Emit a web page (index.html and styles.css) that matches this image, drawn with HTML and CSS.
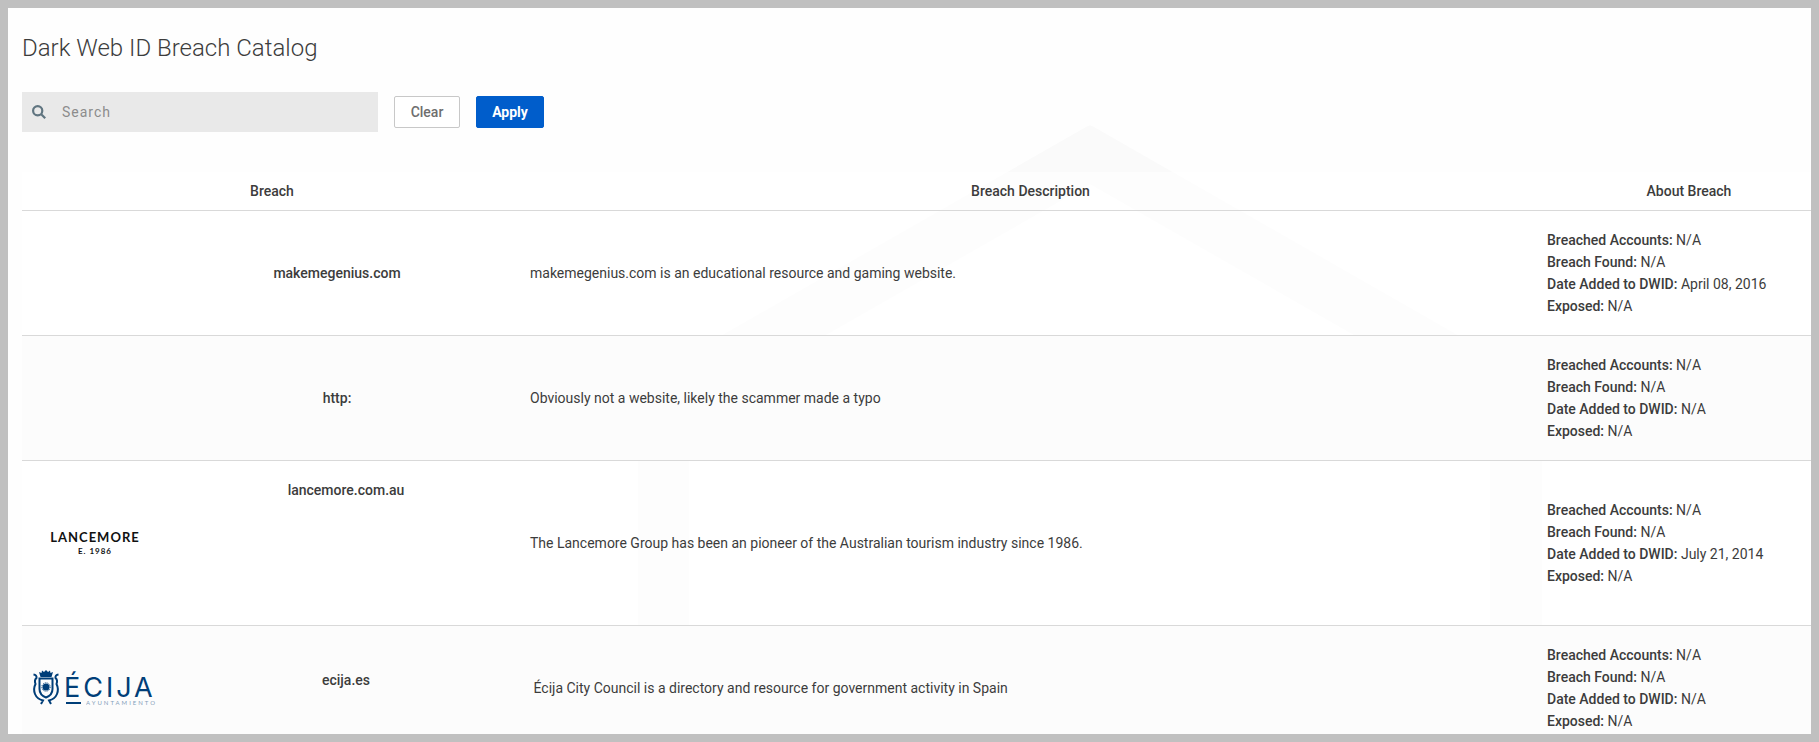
FILE: index.html
```html
<!DOCTYPE html>
<html lang="en">

<head>
    <meta charset="UTF-8">
    <meta name="viewport" content="width=device-width, initial-scale=1.0">
    <title>Dark Web ID Breach Catalog</title>
    <link rel="stylesheet" href="styles.css">
</head>

<body>
    <main class="page">
        <!-- Background watermark -->
        <svg class="watermark" viewBox="0 0 1000 620" aria-hidden="true">
            <path d="M496 9 Q500 6 504 9 L1000 293 H897 L500 66 L103 293 H0 Z" />
            <path d="M48 300 H99 V620 H48 Z M900 300 H952 V620 H900 Z" />
        </svg>

        <h1>Dark Web ID Breach Catalog</h1>

        <form class="filters">
            <div class="search-box">
                <svg class="search-icon" viewBox="0 0 14 14" aria-hidden="true">
                    <circle cx="5.7" cy="5.7" r="4.6" />
                    <path d="M9 9 L13.2 13.2" />
                </svg>
                <input type="text" id="search" name="search" placeholder="Search" aria-label="Search">
            </div>
            <button type="reset" class="btn btn-clear">Clear</button>
            <button type="submit" class="btn btn-apply">Apply</button>
        </form>

        <table class="breaches">
            <colgroup>
                <col class="col-breach">
                <col>
                <col class="col-about">
            </colgroup>
            <thead>
                <tr>
                    <th>Breach</th>
                    <th>Breach Description</th>
                    <th>About Breach</th>
                </tr>
            </thead>
            <tbody>
                <tr>
                    <td>
                        <div class="breach">
                            <div class="logo"></div>
                            <div class="name">makemegenius.com</div>
                        </div>
                    </td>
                    <td>makemegenius.com is an educational resource and gaming website.</td>
                    <td>
                        <div><b>Breached Accounts:</b> N/A</div>
                        <div><b>Breach Found:</b> N/A</div>
                        <div><b>Date Added to DWID:</b> April 08, 2016</div>
                        <div><b>Exposed:</b> N/A</div>
                    </td>
                </tr>
                <tr>
                    <td>
                        <div class="breach">
                            <div class="logo"></div>
                            <div class="name">http:</div>
                        </div>
                    </td>
                    <td>Obviously not a website, likely the scammer made a typo</td>
                    <td>
                        <div><b>Breached Accounts:</b> N/A</div>
                        <div><b>Breach Found:</b> N/A</div>
                        <div><b>Date Added to DWID:</b> N/A</div>
                        <div><b>Exposed:</b> N/A</div>
                    </td>
                </tr>
                <tr>
                    <td>
                        <div class="breach">
                            <div class="logo has-image">
                                <svg width="128" height="128" viewBox="0 0 128 128">
                                    <text class="lancemore-name" x="65" y="63">LANCEMORE</text>
                                    <text class="lancemore-year" x="65" y="75">E. 1986</text>
                                </svg>
                            </div>
                            <div class="name">lancemore.com.au</div>
                        </div>
                    </td>
                    <td>The Lancemore Group has been an pioneer of the Australian tourism industry since 1986.</td>
                    <td>
                        <div><b>Breached Accounts:</b> N/A</div>
                        <div><b>Breach Found:</b> N/A</div>
                        <div><b>Date Added to DWID:</b> July 21, 2014</div>
                        <div><b>Exposed:</b> N/A</div>
                    </td>
                </tr>
                <tr>
                    <td>
                        <div class="breach">
                            <div class="logo has-image">
                                <svg width="128" height="38" viewBox="0 0 128 38">
                                    <g class="crest">
                                        <path class="fill" d="M9 3 L11.5 4 L12 1.5 L14 3 L16 1 L18 3 L20 1.5 L20.5 4 L23 3 L21.5 8 H10.5 Z" />
                                        <path class="shield" d="M9.5 9.5 H22.5 V20 Q22.5 26 16 28.5 Q9.5 26 9.5 20 Z" />
                                        <circle class="fill" cx="16" cy="18" r="3.5" />
                                        <circle class="rays" cx="16" cy="18" r="4.2" />
                                        <path class="scroll" d="M3.5 5.5 Q7 6 6.5 9 Q4 11 5.5 15 Q3 20 5 25 Q7 30 13 31.5 L11 35 M28.5 5.5 Q25 6 25.5 9 Q28 11 26.5 15 Q29 20 27 25 Q25 30 19 31.5 L21 35" />
                                    </g>
                                    <text class="ecija-name" x="34" y="28">ÉCIJA</text>
                                    <path class="fill" d="M36 33 H51 V35 H36 Z" />
                                    <text class="ecija-sub" x="56" y="36">AYUNTAMIENTO</text>
                                </svg>
                            </div>
                            <div class="name">ecija.es</div>
                        </div>
                    </td>
                    <td>&nbsp;Écija City Council is a directory and resource for government activity in Spain</td>
                    <td>
                        <div><b>Breached Accounts:</b> N/A</div>
                        <div><b>Breach Found:</b> N/A</div>
                        <div><b>Date Added to DWID:</b> N/A</div>
                        <div><b>Exposed:</b> N/A</div>
                    </td>
                </tr>
            </tbody>
        </table>
    </main>
</body>

</html>
```

FILE: styles.css
```css
* {
    box-sizing: border-box;
}

body {
    margin: 0;
    height: 100vh;
    border: 8px solid #c0c0c0;
    overflow: hidden;
    background-color: #fefefe;
    color: #3c3c3c;
    font-family: Roboto, Arial, sans-serif;
    font-size: 14px;
    line-height: 22px;
}

.page {
    position: relative;
    height: 100%;
    padding: 24px 0 0 14px;
    overflow: hidden;
}

.watermark {
    position: absolute;
    top: 110px;
    left: 60%;
    width: 1000px;
    height: 620px;
    transform: translateX(-50%);
    fill: #fafafa;
}

h1 {
    position: relative;
    margin: 0 0 28px;
    font-size: 24px;
    font-weight: 300;
    line-height: 32px;
}

/* Search bar */
.filters {
    position: relative;
    display: flex;
    align-items: center;
    gap: 16px;
    margin-bottom: 40px;
}

.search-box {
    display: flex;
    align-items: center;
    gap: 16px;
    width: 356px;
    height: 40px;
    padding: 0 10px;
    background-color: #e9e9e9;
}

.search-icon {
    width: 14px;
    height: 14px;
    fill: none;
    stroke: #607580;
    stroke-width: 2.2;
}

.search-box input {
    flex: 1;
    min-width: 0;
    padding: 0;
    border: none;
    outline: none;
    background: none;
    color: #3c3c3c;
    font: inherit;
    letter-spacing: 1px;
}

.search-box input::placeholder {
    color: #8c8c8c;
}

.btn {
    height: 32px;
    padding: 0;
    border: 1px solid #c8c8c8;
    border-radius: 2px;
    font-family: inherit;
    font-size: 14px;
    cursor: pointer;
}

.btn-clear {
    width: 66px;
    background-color: #fff;
    color: #6e6e6e;
    font-weight: 500;
}

.btn-apply {
    width: 68px;
    border-color: #005dcb;
    background-color: #005dcb;
    color: #fff;
    font-weight: 700;
}

/* Breach table, runs past the right edge of the page */
.breaches {
    position: relative;
    width: calc(100% + 28px);
    table-layout: fixed;
    border-collapse: separate;
    border-spacing: 0;
}

.col-breach {
    width: 500px;
}

.col-about {
    width: 300px;
}

.breaches th {
    padding: 8px;
    border-bottom: 1px solid #d9d9d9;
    font-weight: 500;
}

.breaches tr {
    background-color: rgba(255, 255, 255, 0.5);
}

.breaches tbody tr:nth-child(even) {
    background-color: #fcfcfc;
}

.breaches td {
    padding: 18px 8px;
    border-bottom: 1px solid #d9d9d9;
    vertical-align: middle;
}

.breaches b {
    font-weight: 500;
}

.breach {
    display: flex;
    align-items: flex-start;
}

.logo {
    flex: none;
    width: 130px;
}

.logo.has-image {
    width: 148px;
}

.logo svg {
    display: block;
}

.name {
    flex: 1;
    text-align: center;
    font-weight: 500;
}

/* Logos */
.lancemore-name,
.lancemore-year {
    fill: #111;
    font-family: Lato, sans-serif;
    font-weight: 700;
    text-anchor: middle;
}

.lancemore-name {
    font-size: 13px;
    letter-spacing: 1px;
}

.lancemore-year {
    font-size: 8px;
    letter-spacing: 1px;
}

.logo .fill,
.ecija-name,
.ecija-sub {
    fill: #003e78;
}

.shield,
.scroll,
.rays {
    fill: none;
    stroke: #003e78;
    stroke-width: 2;
}

.rays {
    stroke-width: 1;
    stroke-dasharray: 1 1;
}

.ecija-name {
    font-family: Inter, sans-serif;
    font-size: 27px;
    font-weight: 400;
    letter-spacing: 3px;
}

.ecija-sub {
    font-family: Lato, sans-serif;
    font-size: 6px;
    letter-spacing: 2px;
    opacity: 0.5;
}
```
